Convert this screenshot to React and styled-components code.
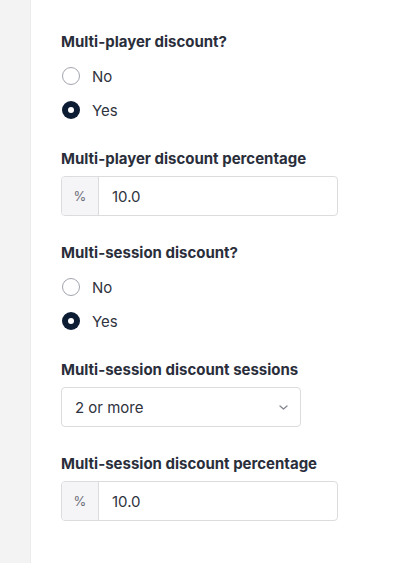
import React, { useState } from "react";
import styled, { createGlobalStyle } from "styled-components";

const GlobalStyle = createGlobalStyle`
  html, body {
    margin: 0;
    padding: 0;
    background: #ffffff;
    font-family: Inter, "Noto Sans", "Liberation Sans", sans-serif;
    color: #2a2e3b;
  }
  * { box-sizing: border-box; }
`;

const Page = styled.div`
  display: flex;
  min-height: 563px;
`;

const Rail = styled.div`
  width: 31px;
  flex-shrink: 0;
  background: #f3f3f3;
  border-right: 1px solid #ececec;
`;

const Form = styled.form`
  display: flex;
  flex-direction: column;
  gap: 27px;
  padding: 32px 0 0 30px;
`;

const Group = styled.div`
  display: flex;
  flex-direction: column;
`;

const Label = styled.div`
  font-size: 15px;
  line-height: 20px;
  font-weight: 700;
  color: #2a2e3b;
  margin-bottom: ${(p) => (p.$tight ? "7px" : "12px")};
`;

const Options = styled.div`
  display: flex;
  flex-direction: column;
  gap: 10px;
`;

const Option = styled.label`
  display: flex;
  align-items: center;
  gap: 12px;
  height: 24px;
  font-size: 15px;
  color: #2f3340;
  cursor: pointer;
`;

const Dot = styled.span`
  width: 18px;
  height: 18px;
  border-radius: 50%;
  flex-shrink: 0;
  margin-left: 1px;
  display: flex;
  align-items: center;
  justify-content: center;
  border: ${(p) => (p.$on ? "none" : "1.5px solid #a3a5ad")};
  background: ${(p) => (p.$on ? "#0c1d33" : "#ffffff")};
  &::after {
    content: "";
    width: 6px;
    height: 6px;
    border-radius: 50%;
    background: #ffffff;
    display: ${(p) => (p.$on ? "block" : "none")};
  }
`;

const InputBox = styled.div`
  display: flex;
  width: ${(p) => p.$width}px;
  height: 40px;
  border: 1px solid #dcdcdf;
  border-radius: 4px;
  overflow: hidden;
  background: #fff;
`;

const Prefix = styled.span`
  width: 37px;
  flex-shrink: 0;
  display: flex;
  align-items: center;
  justify-content: center;
  background: #f5f5f7;
  border-right: 1px solid #dcdcdf;
  font-size: 13px;
  color: #6b6e78;
`;

const Value = styled.span`
  display: flex;
  align-items: center;
  flex: 1;
  padding: 0 13px;
  font-size: 15px;
  color: #2f3340;
`;

const Chevron = styled.span`
  display: flex;
  align-items: center;
  padding-right: 12px;
  color: #85878f;
`;

function RadioGroup({ label, value, onChange }) {
  return (
    <Group>
      <Label>{label}</Label>
      <Options>
        {["No", "Yes"].map((opt) => (
          <Option key={opt} onClick={() => onChange(opt)}>
            <Dot $on={value === opt} />
            {opt}
          </Option>
        ))}
      </Options>
    </Group>
  );
}

function PercentField({ label, value }) {
  return (
    <Group>
      <Label $tight>{label}</Label>
      <InputBox $width={277}>
        <Prefix>%</Prefix>
        <Value>{value}</Value>
      </InputBox>
    </Group>
  );
}

export default function App() {
  const [player, setPlayer] = useState("Yes");
  const [session, setSession] = useState("Yes");

  return (
    <Page>
      <GlobalStyle />
      <Rail />
      <Form onSubmit={(e) => e.preventDefault()}>
        <RadioGroup label="Multi-player discount?" value={player} onChange={setPlayer} />
        <PercentField label="Multi-player discount percentage" value="10.0" />
        <RadioGroup label="Multi-session discount?" value={session} onChange={setSession} />
        <Group>
          <Label $tight>Multi-session discount sessions</Label>
          <InputBox $width={240}>
            <Value>2 or more</Value>
            <Chevron>
              <svg width="9" height="5" viewBox="0 0 9 5" fill="none">
                <path d="M1 1l3.5 3 3.5-3" stroke="currentColor" strokeWidth="1.3" strokeLinecap="round" strokeLinejoin="round" />
              </svg>
            </Chevron>
          </InputBox>
        </Group>
        <PercentField label="Multi-session discount percentage" value="10.0" />
      </Form>
    </Page>
  );
}
